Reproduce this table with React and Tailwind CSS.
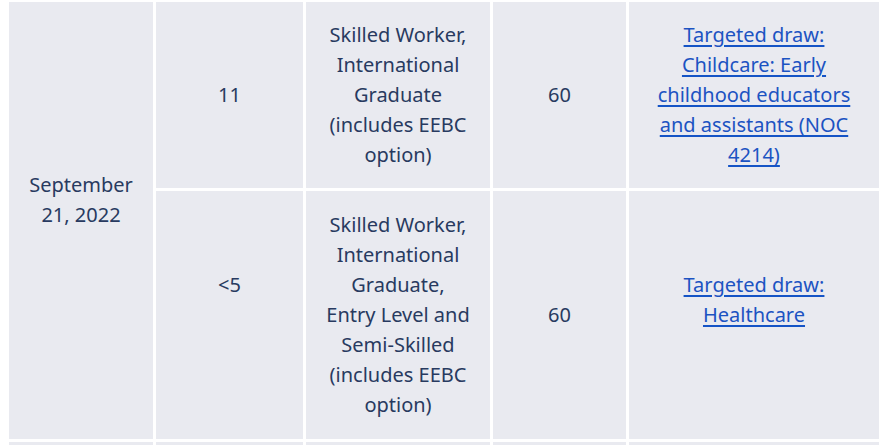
import React from "react";

const cell = "bg-[#e9eaf0] text-center p-0";
const link = "text-[#1c53c2] underline decoration-[#1554c6] underline-offset-[3px]";

export default function App() {
  return (
    <div className="w-[890px] h-[445px] overflow-hidden bg-white pl-[6px] font-['Noto_Sans',sans-serif] text-[20px] leading-[30px] text-[#283a60]">
      <table className="table-fixed border-separate border-spacing-[3px] -mt-px">
        <colgroup>
          <col className="w-[144px]" />
          <col className="w-[147px]" />
          <col className="w-[184px]" />
          <col className="w-[133px]" />
          <col className="w-[250px]" />
        </colgroup>
        <tbody>
          <tr className="h-[186px]">
            <td rowSpan={2} className={`${cell} align-top pt-[168px]`}>
              September<br />21, 2022
            </td>
            <td className={`${cell} align-middle`}>11</td>
            <td className={`${cell} align-top pt-[18px]`}>
              Skilled Worker,<br />International<br />Graduate<br />(includes EEBC<br />option)
            </td>
            <td className={`${cell} align-middle`}>60</td>
            <td className={`${cell} align-top pt-[18px]`}>
              <a href="#" className={link}>
                Targeted draw:<br />Childcare: Early<br />childhood educators<br />and assistants (NOC<br />4214)
              </a>
            </td>
          </tr>
          <tr className="h-[248px]">
            <td className={`${cell} align-top pt-[79px]`}>&lt;5</td>
            <td className={`${cell} align-top pt-[19px]`}>
              Skilled Worker,<br />International<br />Graduate,<br />Entry Level and<br />Semi-Skilled<br />(includes EEBC<br />option)
            </td>
            <td className={`${cell} align-middle`}>60</td>
            <td className={`${cell} align-top pt-[79px]`}>
              <a href="#" className={link}>
                Targeted draw:<br />Healthcare
              </a>
            </td>
          </tr>
          <tr className="h-[186px]">
            <td className={cell}></td>
            <td className={cell}></td>
            <td className={cell}></td>
            <td className={cell}></td>
            <td className={cell}></td>
          </tr>
        </tbody>
      </table>
    </div>
  );
}
